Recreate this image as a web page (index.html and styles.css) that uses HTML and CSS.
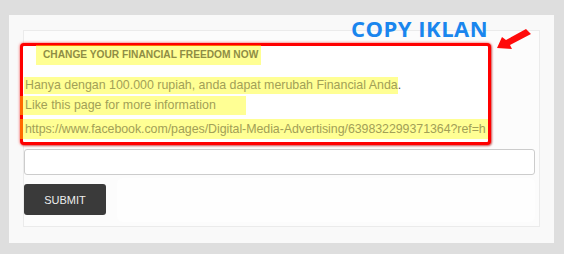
FILE: index.html
```html
<!DOCTYPE html>
<html>
<head>
<meta charset="utf-8">
<link rel="stylesheet" href="styles.css">
</head>
<body>
<div class="panel">
  <div class="box">
    <div class="ad">
      <div class="hl hl-head">CHANGE YOUR FINANCIAL FREEDOM NOW</div>
      <div class="line line-1"><span class="hl">Hanya dengan 100.000 rupiah, anda dapat merubah Financial Anda</span>.</div>
      <div class="hl line line-2">Like this page for more information</div>
      <div class="hl line line-3">https://www.facebook.com/pages/Digital-Media-Advertising/639832299371364?ref=h</div>
    </div>
    <div class="field"></div>
    <div class="actions">
      <button class="submit">SUBMIT</button>
      <div class="blank"></div>
    </div>
  </div>
</div>
<div class="note">COPY IKLAN</div>
<svg class="arrow" width="40" height="26" viewBox="0 0 40 26">
  <polygon points="2,20 7,9 11,12 31,1 36,6 15,17 17,21" fill="#ff0a0a"/>
</svg>
</body>
</html>
```

FILE: styles.css
```css
html, body {
  margin: 0;
  padding: 0;
}
body {
  background: #dedede;
  font-family: "Liberation Sans", Arial, sans-serif;
  width: 564px;
  height: 254px;
  overflow: hidden;
  position: relative;
}
.panel {
  margin: 15px 10px 0 9px;
  height: 228px;
  box-sizing: border-box;
  background: #f9f9f9;
  padding: 15px 14px 0 14px;
}
.box {
  border: 1px solid #ebebeb;
  background: #fcfcfc;
  height: 197px;
  box-sizing: border-box;
  padding: 12px 4px 0 0;
}
.ad {
  margin-left: -4px;
  width: 471px;
  height: 102px;
  box-sizing: border-box;
  border: 3px solid #ff0000;
  border-radius: 4px;
  background: #ffffff;
  box-shadow: 0 0 3px rgba(255, 0, 0, 0.7), 1px 1px 2px rgba(120, 0, 0, 0.45);
  font-size: 12.4px;
  color: #a2a057;
}
.hl {
  background: rgba(255, 255, 0, 0.42);
}
.hl-head {
  width: fit-content;
  margin: -1px 0 0 13px;
  padding: 0 3px 0 7px;
  height: 20px;
  line-height: 20px;
  font-size: 10.2px;
  font-weight: bold;
  color: #8f8d45;
}
.line {
  white-space: nowrap;
}
.line-1 {
  margin: 12px 0 0 1px;
  height: 17px;
  line-height: 17px;
  color: #555;
}
.line-1 .hl {
  display: inline-block;
  padding-left: 1px;
  color: #a2a057;
}
.line-2 {
  margin: 2px 0 0 -3px;
  padding-left: 5px;
  width: 221px;
  height: 19px;
  line-height: 18px;
}
.line-3 {
  margin: 4px 0 0 -3px;
  padding-left: 5px;
  width: 463px;
  height: 20px;
  line-height: 20px;
  letter-spacing: -0.05px;
}
.field {
  margin-top: 4px;
  height: 26px;
  box-sizing: border-box;
  border: 1px solid #cccccc;
  border-radius: 3px;
  background: #ffffff;
}
.actions {
  display: flex;
  gap: 11px;
  margin-top: 9px;
}
.submit {
  width: 82px;
  height: 31px;
  border: none;
  border-radius: 3px;
  background: #3a3a3a;
  color: #eeeeee;
  font-family: "Liberation Sans", Arial, sans-serif;
  font-size: 11px;
  padding: 0;
}
.blank {
  flex: 1;
  height: 44px;
  margin-top: -6px;
  background: #fefefe;
  border-radius: 6px;
}
.note {
  position: absolute;
  left: 351px;
  top: 13px;
  font-family: "Open Sans", sans-serif;
  font-weight: bold;
  font-size: 22px;
  letter-spacing: 0.5px;
  color: #1a86ee;
}
.arrow {
  position: absolute;
  left: 495px;
  top: 28px;
}
```
